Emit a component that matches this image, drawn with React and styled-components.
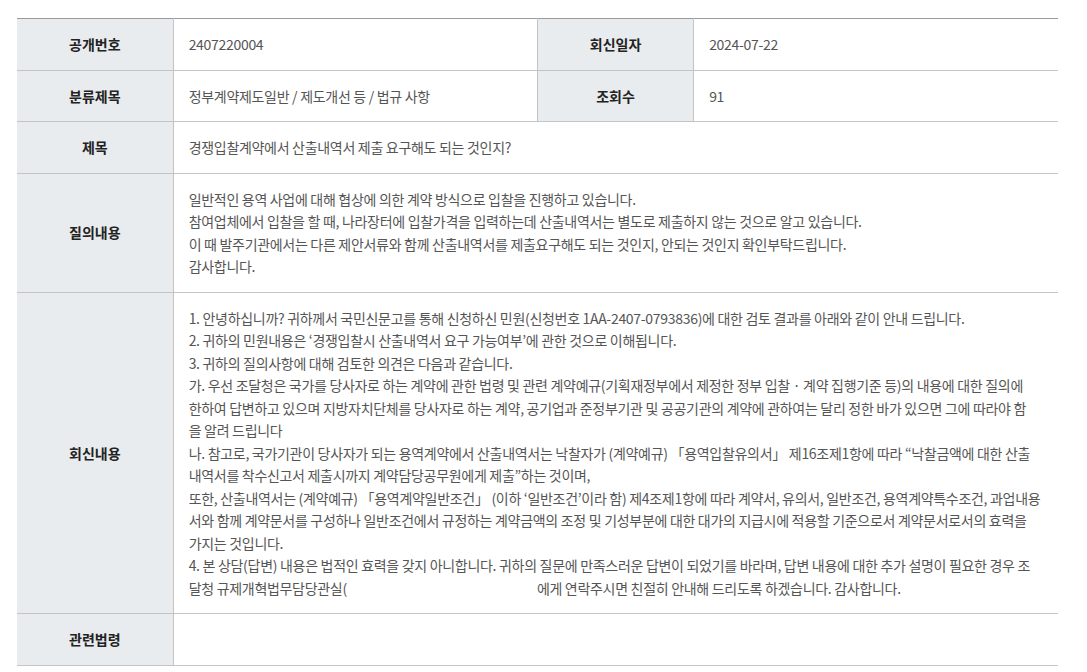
import styled, { createGlobalStyle } from "styled-components";

const GlobalStyle = createGlobalStyle`
  body {
    margin: 0;
    background: #fff;
    font-family: "Noto Sans CJK KR", "Noto Sans", sans-serif;
  }
`;

const Wrap = styled.div`
  padding: 18px 29px 0 17px;
`;

const Table = styled.table`
  width: 100%;
  border-collapse: collapse;
  table-layout: fixed;
  border-top: 1px solid #9a9a9a;
  font-size: 14px;
`;

const Row = styled.tr`
  border-bottom: 1px solid #c4c4c4;
`;

const Head = styled.th`
  background: #e9ecee;
  color: #222;
  font-weight: 700;
  text-align: center;
  line-height: 22.5px;
  padding: 14px 10px;
  border-right: 1px solid #c4c4c4;
  border-left: ${({ $divider }) => ($divider ? "1px solid #c4c4c4" : "none")};
`;

const Cell = styled.td`
  color: #555;
  line-height: 22.5px;
  padding: 14px 15px;
  vertical-align: middle;
  letter-spacing: -0.3px;
`;

const Line = styled.div`
  white-space: nowrap;
`;

const Redacted = styled.span`
  display: inline-block;
  width: ${({ $w }) => $w}px;
`;

const question = [
  "일반적인 용역 사업에 대해 협상에 의한 계약 방식으로 입찰을 진행하고 있습니다.",
  "참여업체에서 입찰을 할 때, 나라장터에 입찰가격을 입력하는데 산출내역서는 별도로 제출하지 않는 것으로 알고 있습니다.",
  "이 때 발주기관에서는 다른 제안서류와 함께 산출내역서를 제출요구해도 되는 것인지, 안되는 것인지 확인부탁드립니다.",
  "감사합니다.",
];

const answer = [
  "1. 안녕하십니까? 귀하께서 국민신문고를 통해 신청하신 민원(신청번호 1AA-2407-0793836)에 대한 검토 결과를 아래와 같이 안내 드립니다.",
  "2. 귀하의 민원내용은 ‘경쟁입찰시 산출내역서 요구 가능여부’에 관한 것으로 이해됩니다.",
  "3. 귀하의 질의사항에 대해 검토한 의견은 다음과 같습니다.",
  "가. 우선 조달청은 국가를 당사자로 하는 계약에 관한 법령 및 관련 계약예규(기획재정부에서 제정한 정부 입찰 · 계약 집행기준 등)의 내용에 대한 질의에",
  "한하여 답변하고 있으며 지방자치단체를 당사자로 하는 계약, 공기업과 준정부기관 및 공공기관의 계약에 관하여는 달리 정한 바가 있으면 그에 따라야 함",
  "을 알려 드립니다",
  "나. 참고로, 국가기관이 당사자가 되는 용역계약에서 산출내역서는 낙찰자가 (계약예규) 「용역입찰유의서」 제16조제1항에 따라 “낙찰금액에 대한 산출",
  "내역서를 착수신고서 제출시까지 계약담당공무원에게 제출”하는 것이며,",
  "또한, 산출내역서는 (계약예규) 「용역계약일반조건」 (이하 ‘일반조건’이라 함) 제4조제1항에 따라 계약서, 유의서, 일반조건, 용역계약특수조건, 과업내용",
  "서와 함께 계약문서를 구성하나 일반조건에서 규정하는 계약금액의 조정 및 기성부분에 대한 대가의 지급시에 적용할 기준으로서 계약문서로서의 효력을",
  "가지는 것입니다.",
  "4. 본 상담(답변) 내용은 법적인 효력을 갖지 아니합니다. 귀하의 질문에 만족스러운 답변이 되었기를 바라며, 답변 내용에 대한 추가 설명이 필요한 경우 조",
];

export default function App() {
  return (
    <>
      <GlobalStyle />
      <Wrap>
        <Table>
          <colgroup>
            <col style={{ width: "15%" }} />
            <col style={{ width: "35%" }} />
            <col style={{ width: "15%" }} />
            <col style={{ width: "35%" }} />
          </colgroup>
          <tbody>
            <Row>
              <Head>공개번호</Head>
              <Cell>2407220004</Cell>
              <Head $divider>회신일자</Head>
              <Cell>2024-07-22</Cell>
            </Row>
            <Row>
              <Head>분류제목</Head>
              <Cell>정부계약제도일반 / 제도개선 등 / 법규 사항</Cell>
              <Head $divider>조회수</Head>
              <Cell>91</Cell>
            </Row>
            <Row>
              <Head>제목</Head>
              <Cell colSpan={3}>
                경쟁입찰계약에서 산출내역서 제출 요구해도 되는 것인지?
              </Cell>
            </Row>
            <Row>
              <Head>질의내용</Head>
              <Cell colSpan={3}>
                {question.map((t) => (
                  <Line key={t}>{t}</Line>
                ))}
              </Cell>
            </Row>
            <Row>
              <Head>회신내용</Head>
              <Cell colSpan={3}>
                {answer.map((t) => (
                  <Line key={t}>{t}</Line>
                ))}
                <Line>
                  달청 규제개혁법무담당관실(
                  <Redacted $w={190} />
                  에게 연락주시면 친절히 안내해 드리도록 하겠습니다. 감사합니다.
                </Line>
              </Cell>
            </Row>
            <Row>
              <Head>관련법령</Head>
              <Cell colSpan={3}></Cell>
            </Row>
          </tbody>
        </Table>
      </Wrap>
    </>
  );
}
